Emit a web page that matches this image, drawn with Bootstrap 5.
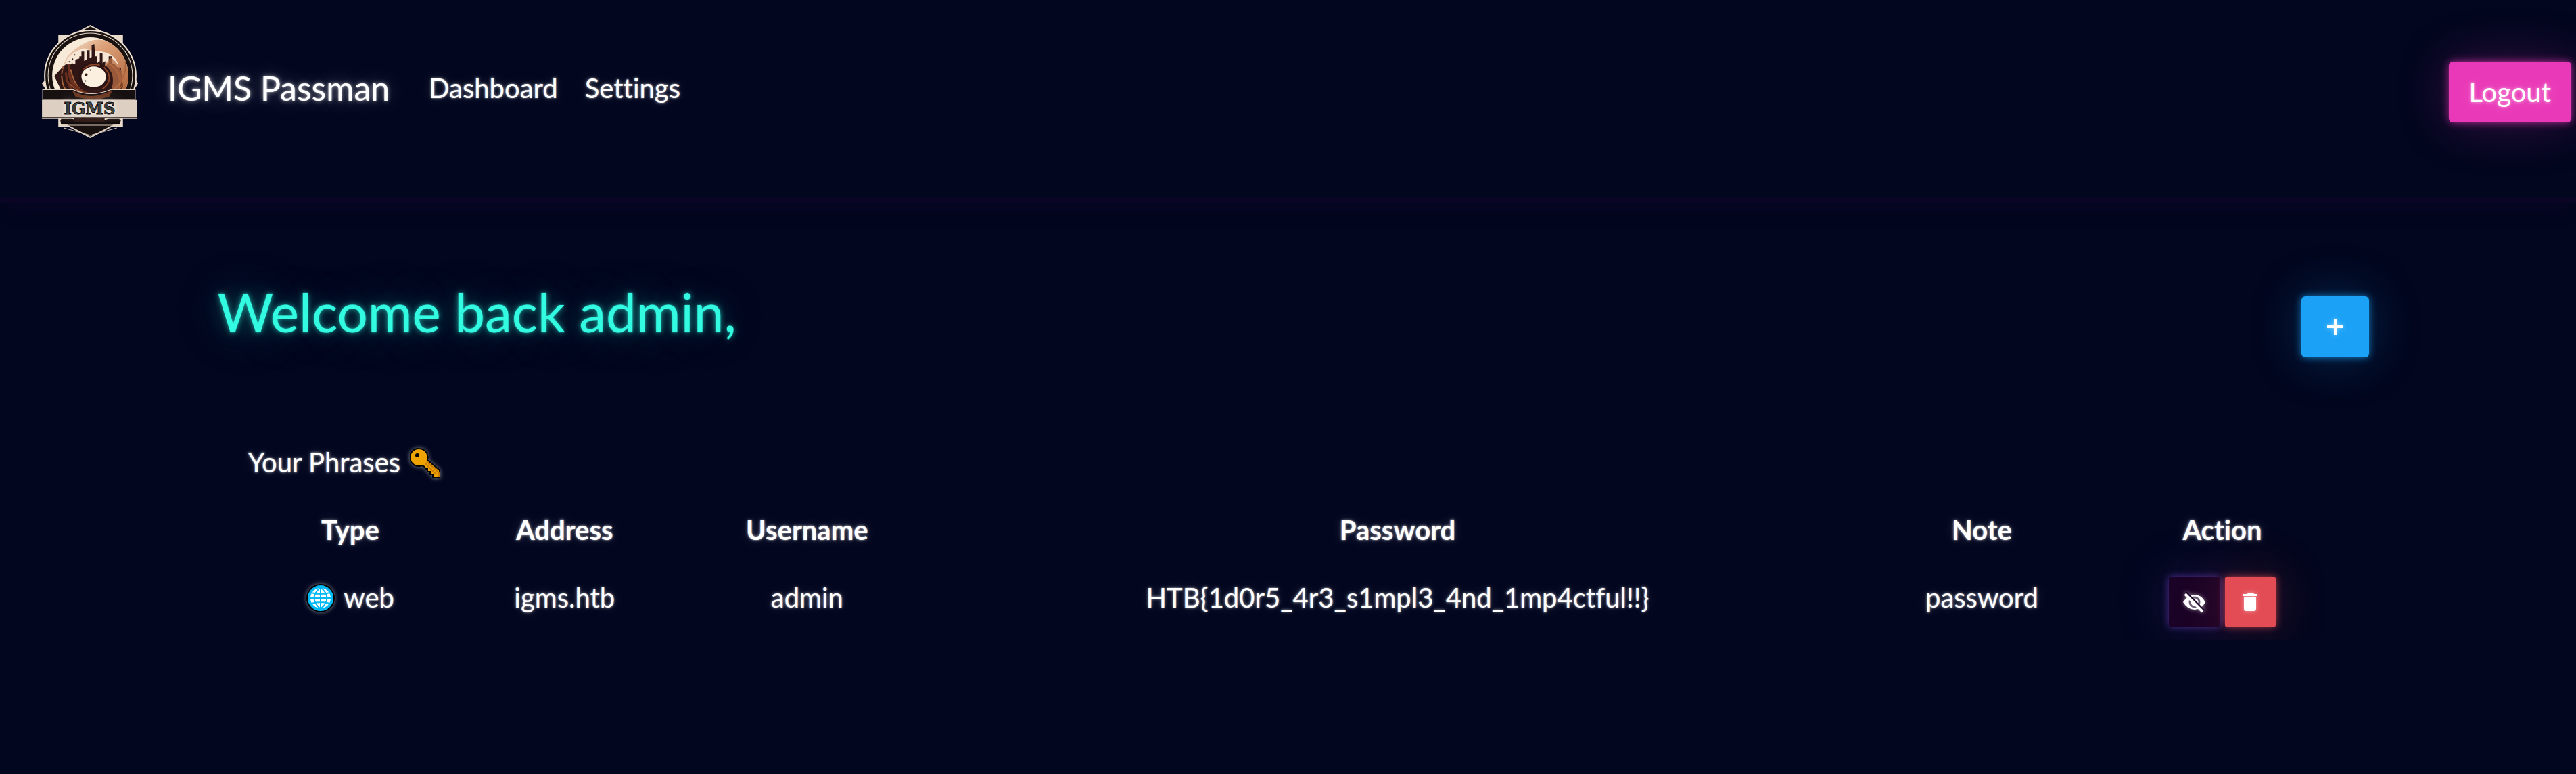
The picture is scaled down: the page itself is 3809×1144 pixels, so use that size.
<!DOCTYPE html>
<html lang="en">
<head>
<meta charset="utf-8">
<meta name="viewport" content="width=device-width, initial-scale=1">
<title>IGMS Passman</title>
<link href="https://cdn.jsdelivr.net/npm/bootstrap@5.3.0/dist/css/bootstrap.min.css" rel="stylesheet">
<style>
  body { background: #02061e; color: #fff; font-family: Lato, "Open Sans", sans-serif; font-size: 40px; line-height: 60px; font-variant-ligatures: none; }
  .soft-glow { text-shadow: 0 0 2px rgba(255,255,255,.5), 0 0 5px rgba(255,255,255,.5), 0 0 20px rgba(255,255,255,.16); }
  .topbar { padding: 36px 7px 69px 62px; border-bottom: 6px solid #0c0424; box-shadow: 0 0 50px rgba(160,0,140,.07); }
  .brand-link { gap: 44px; color: #fff; font-size: 50px; line-height: 70px; text-decoration: none; text-shadow: 0 0 2px rgba(255,255,255,.6), 0 0 7px rgba(255,255,255,.6), 0 0 30px rgba(255,255,255,.3), 0 0 70px rgba(255,255,255,.2); }
  .brand-logo { width: 142px; height: 168px; margin-bottom: 20px; }
  .menu-links { margin-left: 58px; gap: 40px; }
  .menu-links .nav-link { color: #fff; padding: 0; }
  .glow-btn { border: 0; border-radius: 6px; color: #fff; font-size: 40px; line-height: 60px; padding: 15px 30px; --glow: #ea39b8;
    background: var(--glow); box-shadow: 0 0 12px color-mix(in srgb, var(--glow) 75%, transparent), 0 0 75px color-mix(in srgb, var(--glow) 25%, transparent); text-shadow: 0 0 5px rgba(255,255,255,.6), 0 0 25px rgba(255,255,255,.2); }
  .glow-btn:hover { color: #fff; background: var(--glow); }
  .glow-btn svg { display: block; overflow: visible; filter: drop-shadow(0 0 3px rgba(255,255,255,.5)); }
  .logout-btn { margin-top: 12px; }
  .add-btn { --glow: #1ba2f6; margin-top: 26px; padding: 15px 30px; }
  .add-btn svg { width: 40px; height: 60px; }
  .tool-btn { border-radius: 2px; padding: 16px 17px; }
  .tool-btn svg { width: 41px; height: 41px; }
  .hide-btn, .hide-btn:hover { --glow: #6f42c1; background: #1a0326; }
  .trash-btn { --glow: #e44c55; }
  .page { max-width: 3196px; padding: 113px 0 0 15px; }
  .welcome { color: #32fbe2; font-size: 80px; line-height: 96px; font-weight: 400; text-shadow: 0 0 2px rgba(50,251,226,.6), 0 0 8px rgba(50,251,226,.6), 0 0 30px rgba(50,251,226,.3), 0 0 80px rgba(50,251,226,.25); }
  .vault { margin-top: 105px; padding: 0 45px; }
  .phrases { --bs-table-bg: transparent; --bs-table-color: #fff; color: #fff; table-layout: fixed; text-align: center; }
  .phrases caption { color: #fff; padding: 20px 0; }
  .phrases th, .phrases td { border: 0; padding: 20px; vertical-align: top; white-space: nowrap; }
  .w-type { width: 9.8%; } .w-addr { width: 10.7%; } .w-user { width: 12.5%; } .w-pass { width: 44%; } .w-note { width: 11.9%; } .w-act { width: 11.1%; }
  .emoji { filter: drop-shadow(0 0 3px rgba(255,255,255,.5)); }
  .emoji-key { width: 45px; height: 45px; vertical-align: -9px; margin-left: 4px; }
  .emoji-web { width: 42px; height: 42px; vertical-align: -7px; margin-right: 4px; }
  .seal-name { font: 700 24px "DejaVu Serif", serif; }
</style>
</head>
<body>
<header class="topbar d-flex align-items-center">
  <a class="brand-link d-flex align-items-center" href="#">
    <svg class="brand-logo" viewBox="22 16 141 167" aria-hidden="true">
      <defs>
        <linearGradient id="copper" x1="0" y1="0" x2="1" y2="1"><stop offset="0" stop-color="#f4e8d9"/><stop offset=".35" stop-color="#dda27a"/><stop offset="1" stop-color="#a95d31"/></linearGradient>
        <linearGradient id="foot" x1="0" y1="0" x2="0" y2="1"><stop offset="0" stop-color="#1e1110"/><stop offset="1" stop-color="#080405"/></linearGradient>
        <clipPath id="disc"><circle cx="93" cy="91" r="56"/></clipPath>
      </defs>
      <path d="M46 31h95v135H46z" fill="#e9dac9"/>
      <path d="M49 41 93 18l44 23v118l-44 23-44-23z" fill="#17100f" stroke="#ded0c2" stroke-width="2"/>
      <path d="m22 103 5-6 133 0 3 6-5 8H27z" fill="#e9dac9"/>
      <circle cx="93" cy="92" r="67" fill="#181110" stroke="#eee1d2" stroke-width="2"/>
      <circle cx="93" cy="91" r="62" fill="none" stroke="#eee1d2" stroke-width="1"/>
      <circle cx="93" cy="91" r="56" fill="#f8ead9"/>
      <g clip-path="url(#disc)">
        <path d="M82 45q28-16 54 7 20 24 12 60l-40 16-48-8q-14-37 0-58 12-12 22-17" fill="url(#copper)"/>
        <path d="M60 65q13-12 25-14l7 3 18 2q22 4 25 23l-20 3-55 2-8-4q5-7 8-15" fill="#f7e6d3"/>
        <path d="M53 78l5-4 4 3 4-4 5 2v-7l6-2v-3h3V56h4v14l4-3V54h4v12l3-2V46l4-1 1 18h3V73l4-3v-12l4 1v14l4-3v8l5-5v-10h5v10l4 2 4 4 5 1 3 27-9 23-25 10-48-10-19-38z" fill="#301716"/>
        <path d="M53 78q-9 34 24 52m-13-48q7 34 37 44m44-59q2 29-17 44m-7-37q23 18 13 39m-77-16q24 30 64 25" fill="none" stroke="#aa623b" stroke-width="2"/>
        <path d="M57 87q3 40 53 40m-48-51q-3 18 9 34m57-32q23 26-4 44m-62-48q-3 36 35 46" fill="none" stroke="#6c301e" stroke-width="3"/>
        <path d="M123 64q24 20 16 44-12 28-49 23 33-3 36-28 2-18-12-27" fill="#b97045" opacity=".75"/>
        <path d="M66 118q16 13 42 10 26-3 31-28v38H66z" fill="#71371f"/>
        <path d="M57 110q22 20 53 14 20-5 31-19M59 116q27 21 66 6" fill="none" stroke="#c97945" stroke-width="1"/>
      </g>
      <ellipse cx="97" cy="92" rx="22" ry="20" fill="#2b1313"/>
      <ellipse cx="98" cy="93" rx="18" ry="15" fill="#fbefdf"/>
      <path d="M113 79q17 17-2 32m-28-29q10-10 24-6" fill="none" stroke="#8b4326" stroke-width="2"/>
      <g fill="#321817"><circle cx="70" cy="61" r="1"/><circle cx="62" cy="71" r="1"/><circle cx="52" cy="90" r="2"/><circle cx="58" cy="78" r="1"/><circle cx="87" cy="90" r="2"/><circle cx="86" cy="99" r="1"/><circle cx="93" cy="83" r="1"/><circle cx="52" cy="82" r="1"/><circle cx="67" cy="67" r="1"/></g>
      <path d="M23 112h45q25 12 55 0h36v15H23z" fill="#171010" stroke="#e5d5c5"/>
      <path d="M66 113q28 17 60-1l-5 10q-23 8-50 0z" fill="#6b361f"/>
      <path d="M22 127h140v28H22z" fill="#ddcfc1"/>
      <path d="M22 126h140M22 153h140" stroke="#1b1211"/>
      <path d="M49 157h89l-2 6H50z" fill="url(#foot)"/>
      <path d="M69 154h45v6H69z" fill="#2b1611"/>
      <path d="M50 164h86M54 168l39 11 39-11" fill="none" stroke="#d8c4b4"/>
      <text class="seal-name" x="92" y="148" text-anchor="middle" stroke="#050505" stroke-width="1">IGMS</text>
    </svg>
    <span>IGMS Passman</span>
  </a>
  <nav class="menu-links nav soft-glow">
    <a class="nav-link" href="#">Dashboard</a>
    <a class="nav-link" href="#">Settings</a>
  </nav>
  <button type="button" class="btn glow-btn logout-btn ms-auto">Logout</button>
</header>

<main class="page mx-auto">
  <div class="d-flex justify-content-between align-items-start">
    <h1 class="welcome m-0">Welcome back admin,</h1>
    <button type="button" class="btn glow-btn add-btn" aria-label="Add phrase">
      <svg viewBox="0 0 40 60" fill="#fff"><path d="M18 18h4v10h10v4H22v10h-4V32H8v-4h10z"/></svg>
    </button>
  </div>
  <section class="vault soft-glow">
    <table class="table caption-top phrases m-0">
      <caption>Your Phrases
        <svg class="emoji emoji-key" viewBox="0 0 45 45" role="img" aria-label="key"><path d="M14 1a13 13 0 1 0 4 25l4 2 1 3h3v4h4v4h4v5h10V33L26 18A13 13 0 0 0 14 1z" fill="#eea300" stroke="#000" stroke-width="2"/><path d="m23 23 16 16M25 20l18 17v6" fill="none" stroke="#c97b00" stroke-width="2"/><circle cx="11" cy="11" r="3" fill="#000"/></svg>
      </caption>
      <colgroup><col class="w-type"><col class="w-addr"><col class="w-user"><col class="w-pass"><col class="w-note"><col class="w-act"></colgroup>
      <thead><tr><th scope="col">Type</th><th scope="col">Address</th><th scope="col">Username</th><th scope="col">Password</th><th scope="col">Note</th><th scope="col">Action</th></tr></thead>
      <tbody><tr>
        <td><svg class="emoji emoji-web" viewBox="0 0 42 42" role="img" aria-label="web page"><circle cx="21" cy="21" r="20" fill="#00b9f5" stroke="#000" stroke-width="2"/><circle cx="21" cy="21" r="15" fill="#fff"/><path d="M21 4v34M4 21h34M7 13q14 4 28 0M7 29q14-4 28 0M21 5q-19 16 0 32M21 5q19 16 0 32" fill="none" stroke="#00b9f5" stroke-width="2"/></svg> web</td>
        <td>igms.htb</td><td>admin</td><td>HTB{1d0r5_4r3_s1mpl3_4nd_1mp4ctful!!}</td><td>password</td>
        <td><div class="d-flex justify-content-center gap-2">
          <button type="button" class="btn glow-btn tool-btn hide-btn" aria-label="Hide password"><svg viewBox="0 0 41 41"><path d="M4 21q7-11 17-11t16 11q-6 11-16 11T4 21z" fill="#fff"/><circle cx="21" cy="21" r="7" fill="none" stroke="#6c6078" stroke-width="3"/><path d="m8 7 27 27" stroke="#1a0326" stroke-width="4"/><path d="m7 9 26 26" stroke="#fff" stroke-width="4"/></svg></button>
          <button type="button" class="btn glow-btn tool-btn trash-btn" aria-label="Delete"><svg viewBox="0 0 41 41" fill="#fff"><path d="M10 9h6l1-2h8l1 2h5v3H10zM11 14h18v17q0 3-3 3H14q-3 0-3-3z"/></svg></button>
        </div></td>
      </tr></tbody>
    </table>
  </section>
</main>
<script src="https://cdn.jsdelivr.net/npm/bootstrap@5.3.0/dist/js/bootstrap.bundle.min.js"></script>
</body>
</html>
